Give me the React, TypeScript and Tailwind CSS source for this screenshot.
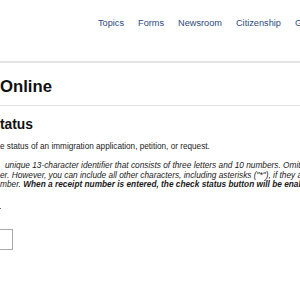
import React from "react";

export default function App() {
  return (
    <div className="w-[300px] h-[300px] overflow-hidden bg-white font-['Liberation_Sans',Arial,sans-serif] text-[#1b1b1b]">
      <header className="h-[63px] border-b-2 border-[#e4e4e4] pt-[17px] pl-[98px]">
        <nav className="flex gap-[14px] whitespace-nowrap text-[9.2px] leading-[12px] text-[#2b4b80]">
          <span>Topics</span>
          <span>Forms</span>
          <span>Newsroom</span>
          <span>Citizenship</span>
          <span>Green Card</span>
        </nav>
      </header>
      <div className="mt-[14px] h-[20px] text-[16.7px] leading-[20px] font-bold whitespace-nowrap text-[#111]">Online</div>
      <div className="mt-[8px] h-px bg-[#e2e2e2]" />
      <div className="mt-[10px] h-[17px] text-[13.8px] leading-[17px] font-bold whitespace-nowrap text-[#111]">tatus</div>
      <div className="mt-[9px] h-[9.3px] text-[8.2px] leading-[9.3px] whitespace-nowrap">
        e status of an immigration application, petition, or request.
      </div>
      <div className="mt-[10px] text-[8.3px] leading-[9.2px] italic whitespace-nowrap">
        <div className="pl-[5px]">unique 13-character identifier that consists of three letters and 10 numbers. Omit dashes ("-")</div>
        <div>er. However, you can include all other characters, including asterisks ("*"), if they are listed</div>
        <div>
          mber. <span className="font-bold">When a receipt number is entered, the check status button will be enabled</span>
        </div>
      </div>
      <div className="mt-[19px] w-[1px] h-[1px] bg-[#666]" />
      <div className="mt-[20px] -ml-[10px] w-[23px] h-[21px] border border-[#a9a9a9]" />
    </div>
  );
}
